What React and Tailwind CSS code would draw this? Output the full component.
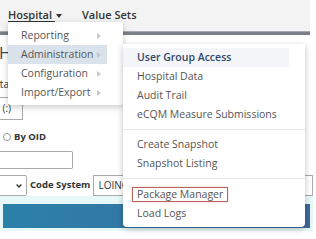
import React from 'react'

function Caret({ className = '' }) {
  return (
    <svg width="6" height="4" viewBox="0 0 6 4" className={className}>
      <path d="M0 0h6L3 4z" fill="currentColor" />
    </svg>
  )
}

function Chevron() {
  return (
    <svg width="4" height="6" viewBox="0 0 4 6" className="text-[#c4c8cc]">
      <path d="M0 0l4 3-4 3z" fill="currentColor" />
    </svg>
  )
}

function SelectArrow() {
  return (
    <svg width="6" height="4" viewBox="0 0 6 4" fill="none" stroke="#333" strokeWidth="1.4">
      <path d="M0.6 0.6L3 3l2.4-2.4" />
    </svg>
  )
}

const mainItems = ['Reporting', 'Administration', 'Configuration', 'Import/Export']

function MainMenu() {
  return (
    <div className="absolute left-[8px] top-[22px] w-[115px] h-[83px] bg-white rounded-[3px] shadow-[0_2px_6px_rgba(0,0,0,0.22)] pt-[4px] pr-[16px]">
      {mainItems.map(item => (
        <div
          key={item}
          className={`h-[19px] flex items-center justify-between pl-[13px] pr-[6px] text-[10.5px] text-[#555] ${item === 'Administration' ? 'bg-[#dae2eb]' : ''}`}
        >
          <span>{item}</span>
          <Chevron />
        </div>
      ))}
    </div>
  )
}

function SubItem({ children, active = false }) {
  return (
    <div
      className={`h-[19px] flex items-center pl-[14px] mr-[16px] text-[10.5px] ${active ? 'bg-[#f3f5f8] font-semibold text-[#33476b]' : 'text-[#555]'}`}
    >
      {children}
    </div>
  )
}

function SubMenu() {
  return (
    <div className="absolute left-[123px] top-[44px] w-[182px] h-[183px] bg-white rounded-b-[4px] shadow-[0_2px_6px_rgba(0,0,0,0.25)] pt-[4px]">
      <SubItem active>User Group Access</SubItem>
      <SubItem>Hospital Data</SubItem>
      <SubItem>Audit Trail</SubItem>
      <SubItem>eCQM Measure Submissions</SubItem>
      <div className="h-px bg-[#e6e6e6] my-[5px]" />
      <SubItem>Create Snapshot</SubItem>
      <SubItem>Snapshot Listing</SubItem>
      <div className="h-px bg-[#e6e6e6] mt-[5px] mb-[6px]" />
      <SubItem>
        <span className="-ml-[5px] px-[4px] leading-[13px] border-[1.5px] border-[#b8645b] shadow-[0_0_2px_#f4c2c0]">
          Package Manager
        </span>
      </SubItem>
      <SubItem>Load Logs</SubItem>
    </div>
  )
}

export default function App() {
  return (
    <div className="relative w-[316px] h-[239px] overflow-hidden bg-white font-['Open_Sans',sans-serif]">
      {/* top nav */}
      <div className="w-[310px] h-[31px] bg-[#f3f3f3] flex items-center pl-[8px] text-[11px] font-semibold text-[#333]">
        <span className="underline underline-offset-2">Hospital&nbsp;</span>
        <Caret className="ml-[1px]" />
        <span className="ml-[20px]">Value Sets</span>
      </div>
      <div className="w-[310px] h-[4px] bg-[#7b7f88] border-t border-[#a4a8ae]" />

      {/* page body, mostly covered by the menus */}
      <div className="mt-[3px] h-[30px] leading-[30px] text-[16.5px] text-[#444] -ml-[1px]">Hospital Data</div>
      <div className="mt-[8px] h-[16px] leading-[16px] text-[10px] text-[#333] -ml-[13px]">Data Type</div>
      <div className="mt-[5px] w-[23px] h-[23px] border border-l-0 border-[#aaa] flex items-center justify-end gap-[6px] pr-[5px] overflow-hidden whitespace-nowrap text-[10px] text-[#333]">
        <span>Period (:)</span>
        <SelectArrow />
      </div>
      <div className="mt-[9px] h-[16px] flex items-center pl-[3px] text-[9.5px] font-bold text-[#333]">
        <span className="w-[8px] h-[8px] rounded-full border border-[#999]" />
        <span className="ml-[3px]">By OID</span>
      </div>
      <div className="mt-[6px] w-[73px] h-[18px] border border-l-0 border-[#aaa] rounded-r-[2px]" />
      <div className="mt-[6px] h-[21px] flex items-stretch text-[9.5px] font-bold text-[#333]">
        <div className="w-[27px] border border-l-0 border-[#aaa] rounded-r-[2px] flex items-center justify-end pr-[4px]">
          <SelectArrow />
        </div>
        <span className="ml-[3px] flex items-center">Code System</span>
        <div className="ml-[3px] w-[220px] border border-[#aaa] flex items-center pl-[4px] font-normal text-[10px]">LOINC</div>
      </div>
      <div className="w-[313px] bg-[#e8f8f8] pt-[8px] pb-[3px] px-[3px]">
        <div className="h-[24px] bg-gradient-to-r from-[#2a81aa] to-[#3c6a9c]" />
      </div>

      <MainMenu />
      <SubMenu />
    </div>
  )
}
